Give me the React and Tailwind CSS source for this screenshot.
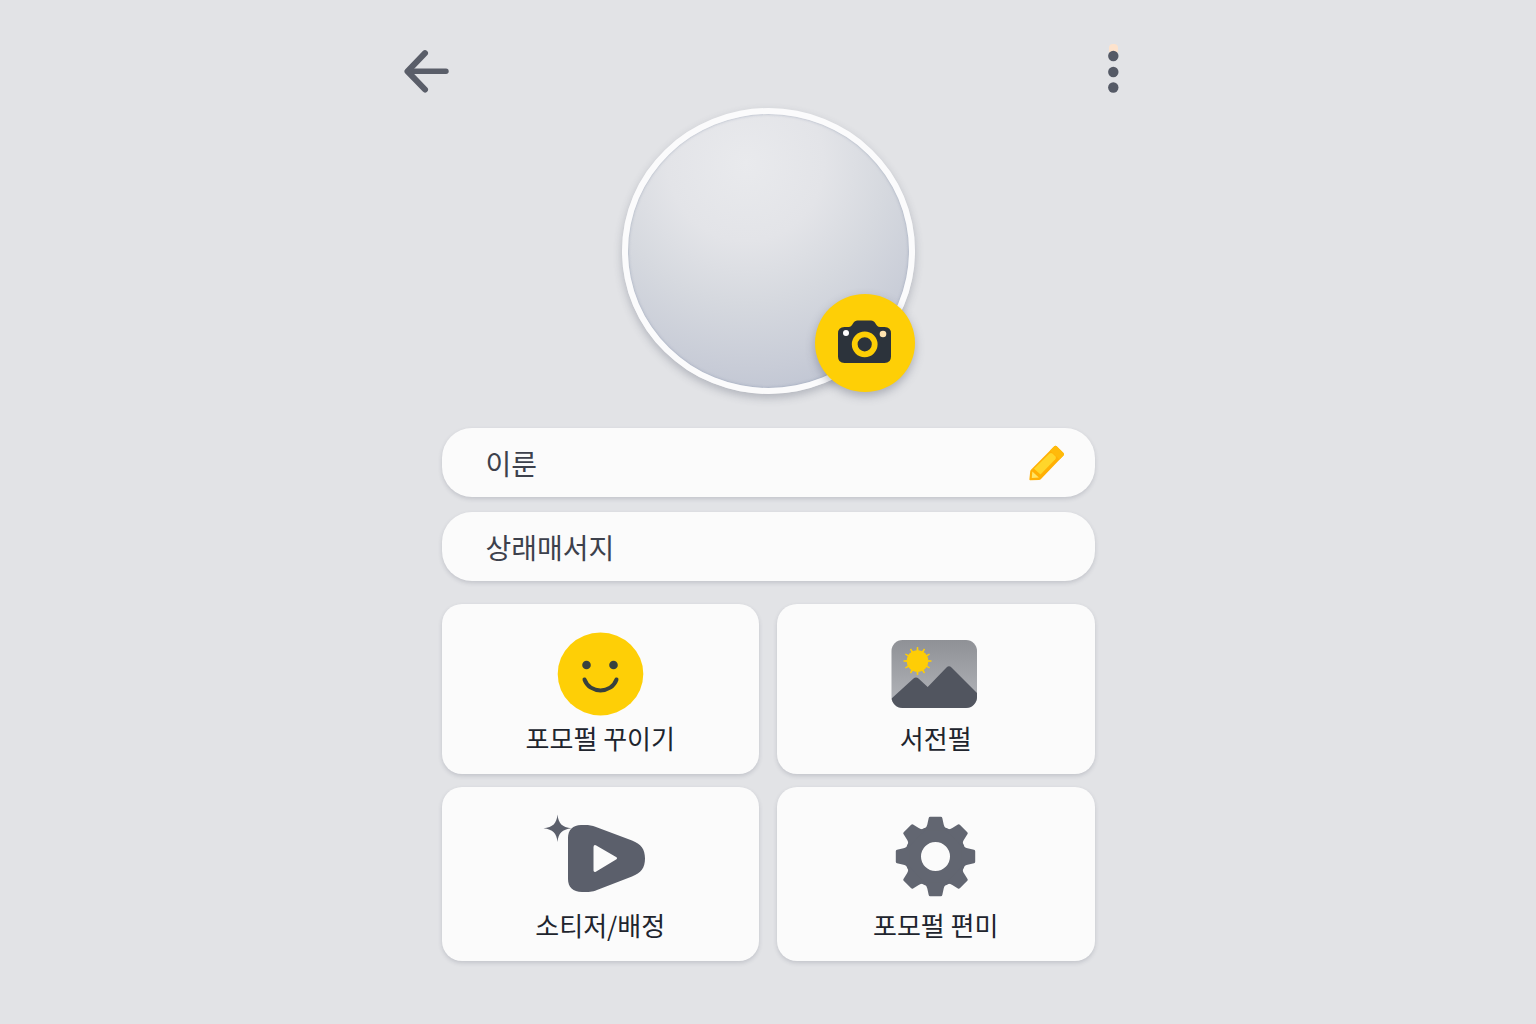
import React from "react"

const TEETH = [0, 45, 90, 135, 180, 225, 270, 315]
const RAYS = [0, 30, 60, 90, 120, 150, 180, 210, 240, 270, 300, 330]

// Icons
function BackIcon() {
    return (
        <svg width="48" height="64" viewBox="0 0 48 64" fill="none" stroke="#5a5e69" strokeWidth="5.4" strokeLinecap="round" strokeLinejoin="round" aria-hidden="true">
            <path d="M44 31.3H7" />
            <path d="M23 13.200L5.500 31.300L23 49.500" strokeWidth="6" />
        </svg>
    )
}

function MoreIcon() {
    return (
        <svg width="40" height="64" viewBox="0 0 40 64" aria-hidden="true">
            <rect x="15" y="4" width="9" height="10" rx="4" fill="#fde3cd" />
            <g fill="#555a66">
                <circle cx="19.300" cy="16" r="5.2" />
                <circle cx="19.300" cy="32" r="5.2" />
                <circle cx="19.300" cy="47.500" r="5.2" />
            </g>
        </svg>
    )
}

function CameraIcon() {
    return (
        <svg width="55" height="44" viewBox="0 0 55 44" aria-hidden="true">
            <path d="M7.500 7H11.500C14 7 14.500 5.500 16 3.500C17.500 1.300 18.500 0.500 20.500 0.500H34C36 0.500 37 1.300 38.500 3.500C40 5.500 40.500 7 43 7H47.500Q54 7 54 13.500V36.500Q54 43 47.500 43H7.500Q1 43 1 36.500V13.500Q1 7 7.500 7Z" fill="#2c333b" />
            <circle cx="27.700" cy="24.300" r="10" fill="none" stroke="#fdce05" strokeWidth="5.800" />
            <circle cx="9" cy="13" r="3" fill="#fff" />
            <circle cx="46" cy="14" r="3.300" fill="#ffe3b0" />
        </svg>
    )
}

function PencilIcon() {
    return (
        <svg width="36" height="36" viewBox="0 0 36 36" aria-hidden="true">
            <path d="M25.300 1.200Q26.500 0.200 27.700 1.300L34.500 8Q35.600 9.200 34.500 10.400L12 34Q11.200 34.900 10 34.900L1.200 35.300Q0.300 35.200 0.400 34.300L1.200 26.500Q1.300 25.500 2 24.800Z" fill="#ffb005" />
            <path d="M25.300 1.200Q26.500 0.200 27.700 1.300L34.500 8Q35.600 9.200 34.500 10.400L30.500 14.500L21 5.500Z" fill="#ffba0a" />
            <path d="M20.500 8.500Q22 7.300 23.500 8.500L26.500 11.500Q27.500 13 26.300 14.300L11.500 29.500L5 23.800Z" fill="#ffd62b" />
            <path d="M3.300 26.500L9.800 32.400L2.800 33Z" fill="#ffe566" />
        </svg>
    )
}

function SmileIcon() {
    return (
        <svg width="120" height="90" viewBox="0 0 120 90" aria-hidden="true">
            <ellipse cx="60.500" cy="46" rx="42.800" ry="41.500" fill="#fecf06" />
            <circle cx="46.500" cy="37" r="4.300" fill="#37413f" />
            <circle cx="73.500" cy="37" r="4.300" fill="#37413f" />
            <path d="M44.500 51.500C49.500 66 71.500 66 76.500 51.500" fill="none" stroke="#37413f" strokeWidth="4" strokeLinecap="round" />
        </svg>
    )
}

function PhotoIcon() {
    return (
        <svg width="120" height="90" viewBox="0 0 120 90" aria-hidden="true">
            <defs>
                <linearGradient id="sky" x1="0" y1="0" x2="0" y2="1">
                    <stop offset="0" stopColor="#8f9196" />
                    <stop offset="1" stopColor="#b4b6bb" />
                </linearGradient>
                <clipPath id="frame">
                    <rect x="15.500" y="12" width="85.500" height="68" rx="11" />
                </clipPath>
            </defs>
            <g clipPath="url(#frame)">
                <rect x="15" y="12" width="87" height="68" fill="url(#sky)" />
                <path d="M15 71L37.500 50.500Q40 48.500 42.500 50.500L51.700 59L70.500 39.500Q73 36.800 75.500 39.500L102 66V80H15Z" fill="#51555f" />
            </g>
            <g transform="translate(41.500 33)" fill="#fecd06">
                <circle r="10.800" />
                {RAYS.map((deg) => (
                    <path key={deg} d="M-1 -10L-0.700 -14H0.700L1 -10Z" transform={`rotate(${deg})`} />
                ))}
            </g>
        </svg>
    )
}

function StickerIcon() {
    return (
        <svg width="120" height="94" viewBox="0 0 120 94" fill="#5b5f6b" aria-hidden="true">
            <path d="M17.500 3.500C18.500 12.500 22 16.300 31.500 17.300C22 18.500 18.500 22 17.500 31C16.500 22 13 18.500 3.500 17.300C13 16.300 16.500 12.500 17.500 3.500Z" />
            <path fillRule="evenodd" d="M28 27C28 19 33 14 41 14H45C49 14 52 14.500 56 16L92 29.500C101 33 105 38 105 47.500C105 57 101 62 92 65.500L57 79C52 81 49 81 42 81C33 81 28 76 28 68ZM53.500 36V59.500Q53.700 61.500 55.800 60.700L76.500 48.300Q77.800 47.300 76.500 46.300L55.800 34.300Q53.700 33.500 53.500 36Z" />
        </svg>
    )
}

function GearIcon() {
    return (
        <svg width="120" height="94" viewBox="0 0 120 94" aria-hidden="true">
            <g transform="translate(59.500 45.500)" fill="#626671">
                <circle r="22.500" fill="none" stroke="#626671" strokeWidth="16" />
                {TEETH.map((deg) => (
                    <path key={deg} d="M-13 -26C-9.500 -28.500 -9 -29.500 -8.200 -32L-6.800 -38.500Q-6.500 -39.700 -5.300 -39.700H5.300Q6.500 -39.700 6.800 -38.500L8.200 -32C9 -29.500 9.500 -28.500 13 -26Z" transform={`rotate(${deg})`} />
                ))}
            </g>
        </svg>
    )
}

const menuItems = [
    { title: "포모펄 꾸이기", icon: SmileIcon },
    { title: "서전펄", icon: PhotoIcon },
    { title: "소티저/배정", icon: StickerIcon },
    { title: "포모펄 편미", icon: GearIcon },
]

const fieldClass = "flex h-[69px] items-center rounded-[30px] bg-[#fbfbfb] pl-11 pr-[30px] shadow-[0_2px_4px_rgba(70,75,95,0.2)]"
const inputClass = "h-full min-w-0 flex-1 bg-transparent text-[28px] leading-10 text-[#3d414c] placeholder:text-[#3d414c] placeholder:opacity-100 outline-none"

export default function App() {
    return (
        <div className="min-h-screen bg-[#e2e3e6] pt-10 pb-8 font-['Noto_Sans_CJK_KR',sans-serif]">
            <header className="mx-auto flex h-16 w-full max-w-[732px] items-center justify-between">
                <button type="button" aria-label="뒤로">
                    <BackIcon />
                </button>
                <button type="button" aria-label="더보기">
                    <MoreIcon />
                </button>
            </header>

            <main className="mx-auto w-full max-w-[653px]">
                {/* Profile photo */}
                <div className="relative mx-auto mt-1 h-[286px] w-[293px]">
                    <div className="h-full w-full rounded-[50%] border-6 border-[#fbfbfc] bg-[radial-gradient(circle_at_42%_18%,#e9eaed_0%,#e3e4e8_28%,#d6d9df_50%,#c8ccd7_74%,#b6bdcd_100%)] shadow-[0_4px_8px_rgba(70,75,95,0.3),inset_0_0_3px_rgba(110,125,155,0.5)]" />
                    <button type="button" aria-label="사진 변경" className="absolute right-0 bottom-0.5 flex h-[98px] w-[100px] items-center justify-center rounded-[50%] bg-[#fecf06] pb-0.5 shadow-[0_4px_10px_rgba(70,75,95,0.35)]">
                        <CameraIcon />
                    </button>
                </div>

                <form className="mt-[34px] flex flex-col gap-[15px]">
                    <div className={fieldClass}>
                        <input type="text" aria-label="이룬" placeholder="이룬" className={inputClass} />
                        <button type="button" aria-label="편집">
                            <PencilIcon />
                        </button>
                    </div>
                    <div className={fieldClass}>
                        <input type="text" aria-label="상래매서지" placeholder="상래매서지" className={inputClass} />
                    </div>
                </form>

                <nav className="mt-[23px] grid grid-cols-2 gap-x-[18px] gap-y-[13px]">
                    {menuItems.map((item) => (
                        <button key={item.title} type="button" className="flex flex-col items-center gap-1 rounded-[20px] bg-[#fbfbfb] pt-6 pb-5 shadow-[0_2px_4px_rgba(70,75,95,0.2)]">
                            <item.icon />
                            <span className="text-[26px] leading-8 text-[#20242d]">{item.title}</span>
                        </button>
                    ))}
                </nav>
            </main>
        </div>
    )
}
